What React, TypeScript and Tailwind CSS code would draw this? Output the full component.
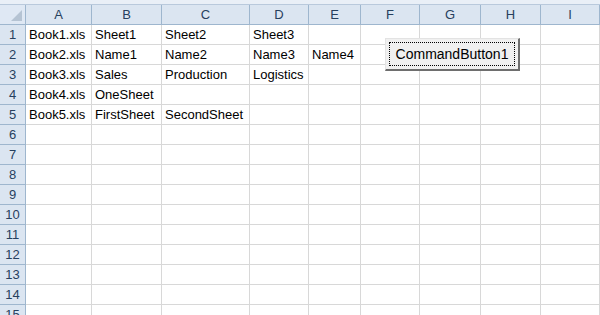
import React from "react";

const cols = [
  { l: "A", w: 66 },
  { l: "B", w: 70 },
  { l: "C", w: 88 },
  { l: "D", w: 59 },
  { l: "E", w: 52 },
  { l: "F", w: 59 },
  { l: "G", w: 61 },
  { l: "H", w: 60 },
  { l: "I", w: 59 },
];

const data: string[][] = [
  ["Book1.xls", "Sheet1", "Sheet2", "Sheet3"],
  ["Book2.xls", "Name1", "Name2", "Name3", "Name4"],
  ["Book3.xls", "Sales", "Production", "Logistics"],
  ["Book4.xls", "OneSheet"],
  ["Book5.xls", "FirstSheet", "SecondSheet"],
];

const font = { fontFamily: '"Liberation Sans", Arial, sans-serif' };

export default function App() {
  const rows = Array.from({ length: 15 }, (_, i) => i + 1);
  return (
    <div className="relative w-[600px] h-[315px] overflow-hidden bg-white" style={font}>
      <div className="h-[4px] bg-[#e9eff7]" />
      <div className="h-[1px] bg-[#b9c9dc]" />
      <div className="flex h-[20px]">
        <div className="relative w-[26px] h-[20px] bg-[#dfe8f4] border-r border-b border-[#9eb6ce]">
          <div
            className="absolute right-[3px] bottom-[3px] w-0 h-0 border-l-[11px] border-l-transparent border-b-[11px] border-b-[#b5c3d3]"
          />
        </div>
        {cols.map((c) => (
          <div
            key={c.l}
            className="h-[20px] bg-[#dbe5f1] border-r border-b border-[#9eb6ce] flex items-center justify-center text-[13px] text-[#27405e]"
            style={{ width: c.w }}
          >
            {c.l}
          </div>
        ))}
      </div>
      {rows.map((r) => (
        <div key={r} className="flex h-[20px]">
          <div className="w-[26px] h-[20px] bg-[#dbe5f1] border-r border-b border-[#9eb6ce] flex items-center justify-center text-[13px] text-[#27405e]">
            {r}
          </div>
          {cols.map((c, ci) => (
            <div
              key={c.l}
              className="h-[20px] border-r border-b border-[#d8d8d8] flex items-center pl-[3px] text-[13px] text-black whitespace-nowrap overflow-visible"
              style={{ width: c.w }}
            >
              {data[r - 1]?.[ci] ?? ""}
            </div>
          ))}
        </div>
      ))}
      <div className="absolute left-[385px] top-[38px] w-[135px] h-[33px] bg-[#f0f0f0] border-t border-l border-[#e3e3e3] border-r-2 border-b-2 border-r-[#6e6e6e] border-b-[#6e6e6e] p-[3px]">
        <div className="w-full h-full border border-dotted border-black flex items-center justify-center text-[14px] text-black">
          CommandButton1
        </div>
      </div>
    </div>
  );
}
